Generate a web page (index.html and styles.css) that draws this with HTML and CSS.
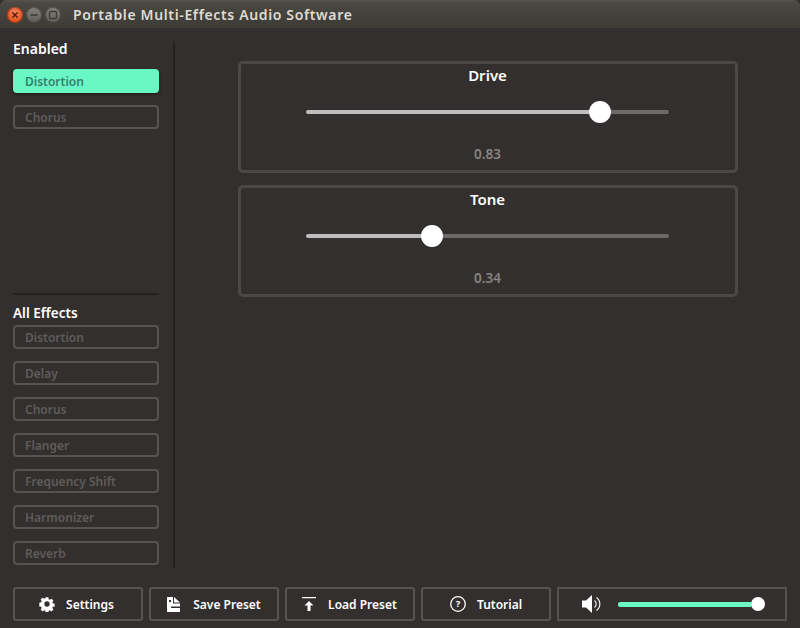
FILE: index.html
```html
<!DOCTYPE html>
<html lang="en">
<head>
<meta charset="utf-8">
<title>Portable Multi-Effects Audio Software</title>
<link rel="stylesheet" href="styles.css">
</head>
<body>
<div class="window">
  <header class="titlebar">
    <div class="controls">
      <span class="ctl ctl-close"><svg viewBox="0 0 10 10" width="10" height="10"><path d="M2.500 2.500l5 5M7.500 2.500l-5 5" stroke="#5a1c08" stroke-width="1.500"/></svg></span>
      <span class="ctl ctl-other"><svg viewBox="0 0 10 10" width="10" height="10"><path d="M1.500 5h7" stroke="#3c3b37" stroke-width="1.600"/></svg></span>
      <span class="ctl ctl-other"><svg viewBox="0 0 10 10" width="10" height="10"><rect x="1.500" y="1.500" width="7" height="7" rx="1" fill="none" stroke="#3c3b37" stroke-width="1.300"/></svg></span>
    </div>
    <span class="title">Portable Multi-Effects Audio Software</span>
  </header>
  <main class="main">
    <aside class="sidebar">
      <section class="enabled">
        <h2 class="heading">Enabled</h2>
        <div class="stack">
          <button class="effect effect-on">Distortion</button>
          <button class="effect">Chorus</button>
        </div>
      </section>
      <section class="all">
        <h2 class="heading heading-all">All Effects</h2>
        <div class="stack">
          <button class="effect">Distortion</button>
          <button class="effect">Delay</button>
          <button class="effect">Chorus</button>
          <button class="effect">Flanger</button>
          <button class="effect">Frequency Shift</button>
          <button class="effect">Harmonizer</button>
          <button class="effect">Reverb</button>
        </div>
      </section>
    </aside>
    <section class="content">
      <div class="panel">
        <div class="panel-title">Drive</div>
        <div class="slider"><div class="fill" style="width:78%"></div><div class="thumb"></div><div class="rest"></div></div>
        <div class="value">0.83</div>
      </div>
      <div class="panel">
        <div class="panel-title">Tone</div>
        <div class="slider"><div class="fill" style="width:31.700%"></div><div class="thumb"></div><div class="rest"></div></div>
        <div class="value">0.34</div>
      </div>
    </section>
  </main>
  <footer class="footer">
    <button class="action action-settings">
      <svg class="icon" viewBox="0 0 16 16" width="16" height="16"><path fill="#fff" fill-rule="evenodd" d="M6.600 1h2.800l.4 2 1.200.5 1.700-1.100 2 2-1.100 1.700.5 1.200 2 .4v2.800l-2 .4-.5 1.200 1.100 1.700-2 2-1.700-1.100-1.200.5-.4 2H6.600l-.4-2-1.200-.5-1.700 1.100-2-2 1.100-1.700-.5-1.200-2-.4V6.600l2-.4.5-1.200L1.300 3.300l2-2L5 2.500l1.200-.5zM8 5.200a2.800 2.800 0 1 0 0 5.600 2.800 2.800 0 0 0 0-5.600z" transform="translate(.4 .4) scale(.95)"/></svg>
      <span>Settings</span>
    </button>
    <button class="action action-save">
      <svg class="icon" viewBox="0 0 13 15" width="13" height="15"><path fill="#fff" fill-rule="evenodd" d="M0 0h6v6.500h7V15H0zM2 3v2h2V3zM4 9.500V11h9V9.500z"/><path fill="#fff" d="M7 0l6 5.500H7z"/></svg>
      <span>Save Preset</span>
    </button>
    <button class="action">
      <svg class="icon" viewBox="0 0 16 16" width="16" height="16"><path fill="#fff" d="M1 1h14v1.300H1zM8 5l4.500 4.500H9.500V15h-3V9.500H3.500z"/></svg>
      <span>Load Preset</span>
    </button>
    <button class="action action-tutorial">
      <svg class="icon" viewBox="0 0 16 16" width="16" height="16"><circle cx="8" cy="8" r="7.300" fill="none" stroke="#fff" stroke-width="1.300"/><text x="8" y="11.300" text-anchor="middle" class="qmark">?</text></svg>
      <span>Tutorial</span>
    </button>
    <div class="volume">
      <svg class="speaker" viewBox="0 0 20 18" width="20" height="18"><path fill="#fff" d="M0 5.500h4L10 0v18l-6-5.500H0z"/><path fill="none" stroke="#fff" stroke-width="1.100" d="M12.500 5.500a4.500 4.500 0 0 1 0 7M14.500 2.500a8 8 0 0 1 0 13"/></svg>
      <div class="vol-slider"><div class="vol-fill"></div><div class="thumb thumb-small"></div></div>
    </div>
  </footer>
</div>
</body>
</html>
```
FILE: styles.css
```css
* { box-sizing: border-box; }
html, body { margin: 0; padding: 0; }
body { width: 800px; height: 628px; overflow: hidden; background: #332f2e; font-family: "Noto Sans", "Open Sans", sans-serif; }
.window { width: 800px; height: 628px; display: flex; flex-direction: column; }
.titlebar { height: 28px; flex: none; display: flex; align-items: center; padding: 2px 0 0 7px; background: linear-gradient(#57544d 0, #4a4842 3px, #3d3b36 100%); border-radius: 6px 6px 0 0; }
.controls { display: flex; gap: 3px; width: 66px; }
.ctl { width: 16px; height: 16px; border-radius: 50%; display: flex; align-items: center; justify-content: center; }
.ctl-close { background: radial-gradient(circle at 50% 35%, #f58560, #e2501c 70%); box-shadow: inset 0 0 0 1px rgba(90,40,20,.5); }
.ctl-other { background: linear-gradient(#85827a, #5f5d56); box-shadow: inset 0 0 0 1px rgba(40,38,34,.5); }
.title { color: #dfdbd2; font-family: "Noto Sans", sans-serif; font-size: 14px; font-weight: 600; letter-spacing: .64px; line-height: 26px; }
.main { flex: 1; min-height: 0; display: flex; padding-top: 13px; }
.sidebar { width: 175px; height: 527px; padding: 0 15px 3px 13px; border-right: 2px solid #242120; display: flex; flex-direction: column; justify-content: space-between; }
.enabled { height: 254px; border-bottom: 2px solid #242120; width: 146px; }
.heading { margin: 0; color: #fff; font-size: 14px; font-weight: 600; line-height: 16px; height: 28px; }
.heading-all { height: 21px; font-size: 13.500px; line-height: 18px; }
.stack { display: flex; flex-direction: column; gap: 12px; }
.effect { width: 146px; height: 24px; padding: 1px 0 0 10px; text-align: left; background: transparent; border: 2px solid #565453; border-radius: 4px; color: #5f5c5b; font: 600 12px/20px "Noto Sans", sans-serif; }
.effect-on { background: #69f7c5; border: 0; color: #35806c; padding-left: 12px; box-shadow: 0 1px 3px rgba(0,0,0,.5); }
.all { width: 146px; }
.content { flex: 1; display: flex; flex-direction: column; align-items: center; gap: 12px; padding-top: 20px; }
.panel { width: 500px; height: 112px; border: 3px solid #4b4948; border-radius: 5px; display: flex; flex-direction: column; align-items: center; padding-top: 1px; }
.panel-title { color: #fff; font-size: 15px; font-weight: 600; line-height: 20px; }
.slider { position: relative; width: 363px; height: 22px; margin-top: 16px; display: flex; align-items: center; }
.fill { height: 4px; background: #bdbdbd; border-radius: 2px 0 0 2px; }
.rest { flex: 1; height: 4px; background: #6c6a69; border-radius: 0 2px 2px 0; }
.thumb { flex: none; width: 22px; height: 22px; border-radius: 50%; background: #fff; }
.value { color: #868382; font-size: 13.500px; font-weight: 600; line-height: 18px; margin-top: 22px; }
.footer { flex: none; height: 41px; display: flex; gap: 6px; padding-left: 13px; padding-bottom: 7px; }
.action { width: 130px; height: 34px; background: transparent; border: 2px solid #565453; border-radius: 3px; color: #fff; font: 600 12px/20px "Noto Sans", sans-serif; display: flex; align-items: center; justify-content: center; gap: 11px; padding: 0 2px 0 0; }
.action span { position: relative; top: 1px; }
.action-settings { padding-right: 3px; }
.action-save { gap: 13px; padding-right: 0; }
.action-tutorial { padding-right: 0; }
.icon { flex: none; }
.qmark { fill: #fff; font: 700 9.500px "Noto Sans", sans-serif; }
.volume { width: 230px; height: 34px; border: 2px solid #565453; display: flex; align-items: center; padding-left: 23px; gap: 16px; }
.speaker { flex: none; }
.vol-slider { display: flex; align-items: center; width: 147px; height: 14px; }
.vol-fill { flex: 1; height: 5px; background: #69f7c5; border-radius: 2px 0 0 2px; }
.thumb-small { width: 14px; height: 14px; }
```
